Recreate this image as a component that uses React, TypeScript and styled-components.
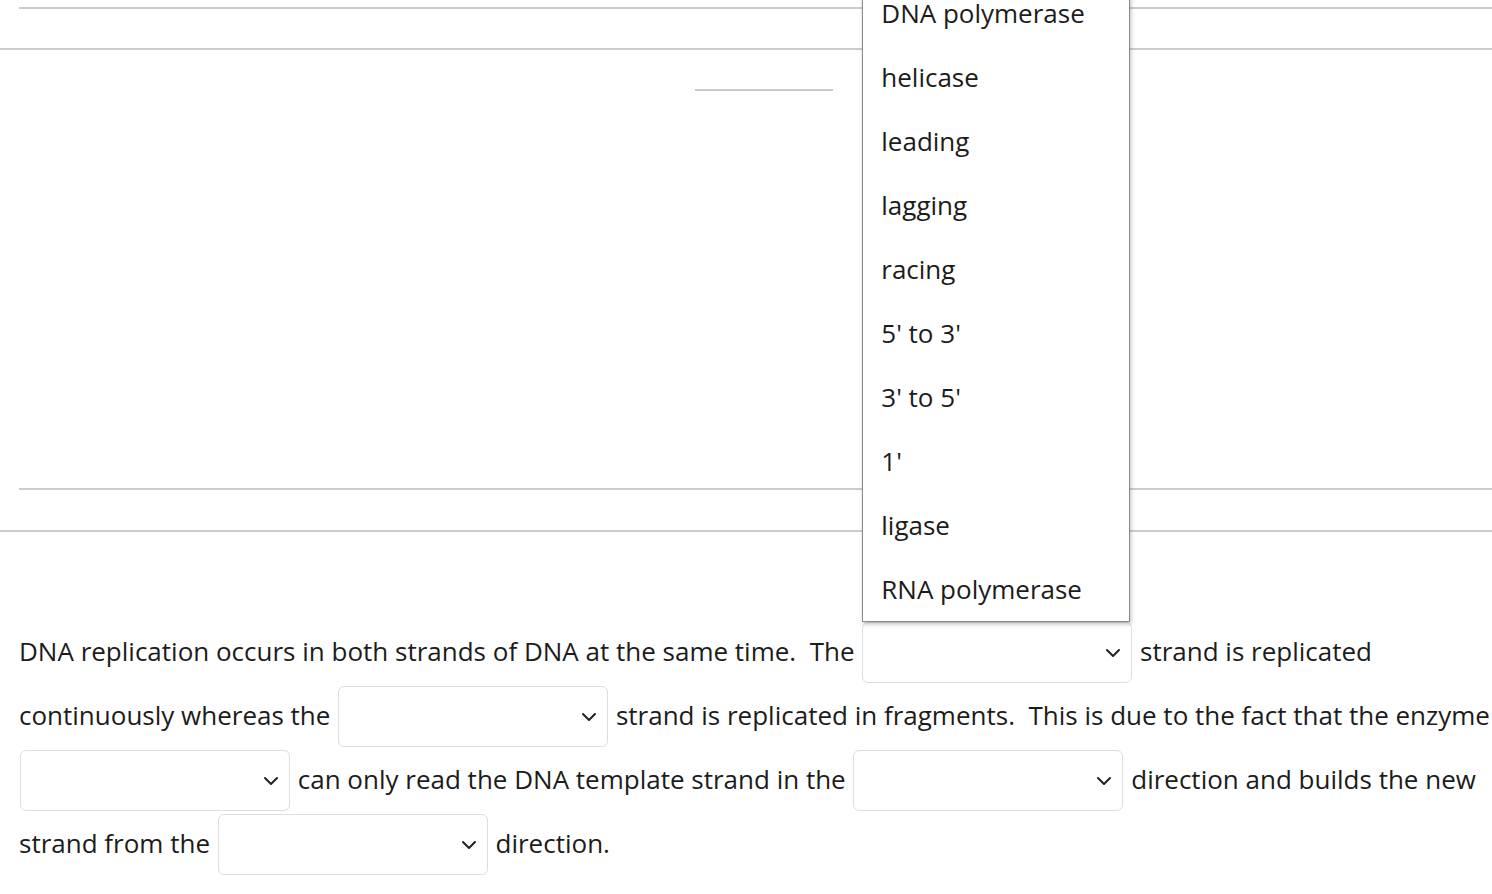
import React from 'react';
import styled, { createGlobalStyle } from 'styled-components';

const GlobalStyle = createGlobalStyle`
  html, body {
    margin: 0;
    padding: 0;
    background: #ffffff;
    overflow: hidden;
  }
  body {
    font-family: "Open Sans", "Noto Sans", "Liberation Sans", sans-serif;
    color: #1c1c1c;
  }
`;

const options = [
  'DNA polymerase',
  'helicase',
  'leading',
  'lagging',
  'racing',
  "5' to 3'",
  "3' to 5'",
  "1'",
  'ligase',
  'RNA polymerase',
];

function Chevron() {
  return (
    <svg width="16" height="10" viewBox="0 0 16 10" fill="none">
      <path d="M2 2 L8 8 L14 2" stroke="#222" strokeWidth="2" strokeLinecap="round" strokeLinejoin="round" />
    </svg>
  );
}

interface DropProps {
  open?: boolean;
}

function Dropdown({ open }: DropProps) {
  return (
    <SelectBox>
      <Chevron />
      {open && (
        <Menu>
          {options.map((o) => (
            <MenuItem key={o}>{o}</MenuItem>
          ))}
        </Menu>
      )}
    </SelectBox>
  );
}

function App() {
  return (
    <>
      <GlobalStyle />
      <Page>
        <Figure>
          <Rule $inset={19} $top={7} />
          <Rule $inset={0} $top={39} />
          <ShortRule />
          <Rule $inset={19} $top={397} />
          <Rule $inset={0} $top={40} />
        </Figure>

        <Passage>
          DNA replication occurs in both strands of DNA at the same time.&nbsp; The <Dropdown open /> strand is replicated
          <br />
          continuously whereas the <Dropdown /> strand is replicated in fragments.&nbsp; This is due to the fact that the enzyme
          <br />
          <Dropdown /> can only read the DNA template strand in the <Dropdown /> direction and builds the new
          <br />
          strand from the <Dropdown /> direction.
        </Passage>
      </Page>
    </>
  );
}

export default App;

const Page = styled.div`
  width: 1492px;
  height: 894px;
  overflow: hidden;
`;

const Figure = styled.div`
  display: flex;
  flex-direction: column;
`;

const Rule = styled.div<{ $inset: number; $top: number }>`
  height: 2px;
  background: #cccccc;
  margin-left: ${(p) => p.$inset}px;
  margin-top: ${(p) => p.$top}px;
`;

const ShortRule = styled.div`
  height: 2px;
  width: 138px;
  background: #c8c8c8;
  margin-left: 695px;
  margin-top: 39px;
`;

const Passage = styled.p`
  margin: 87px 0 0 0;
  padding: 0 0 0 19px;
  font-size: 26px;
  line-height: 64px;
  white-space: nowrap;
`;

const SelectBox = styled.span`
  position: relative;
  display: inline-flex;
  align-items: center;
  justify-content: flex-end;
  box-sizing: border-box;
  width: 270px;
  height: 61px;
  padding-right: 10px;
  margin: 3px 1px 0 1px;
  border: 1.5px solid #dedede;
  border-radius: 6px;
  background: #ffffff;
  vertical-align: top;
  line-height: normal;
`;

const Menu = styled.div`
  position: absolute;
  left: -1px;
  bottom: calc(100% + 1px);
  width: 268px;
  box-sizing: border-box;
  background: #ffffff;
  border: 1px solid #8c8c8c;
  box-shadow: 1px 2px 4px rgba(0, 0, 0, 0.25);
  z-index: 10;
`;

const MenuItem = styled.div`
  height: 64px;
  line-height: 64px;
  padding-left: 18px;
  font-size: 26px;
  color: #1c1c1c;
  text-align: left;
`;
